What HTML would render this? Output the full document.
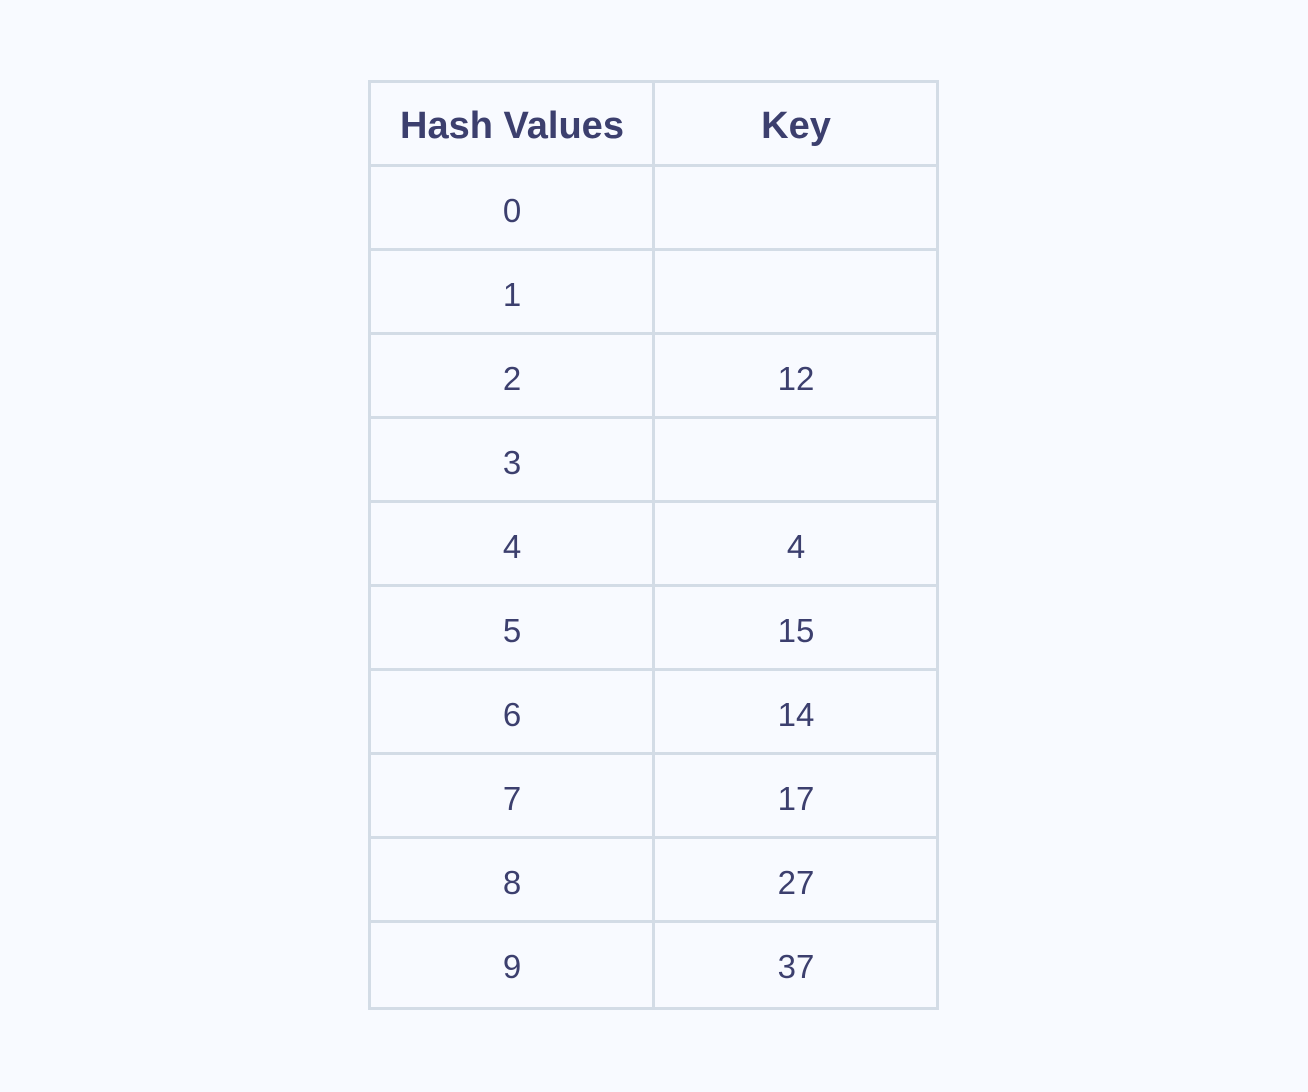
<!DOCTYPE html>
<html><head><style>
body{margin:0;width:1308px;height:1092px;background:#f8faff;position:relative;font-family:"Liberation Sans",sans-serif;color:#3c3f6e;overflow:hidden}
.h{position:absolute;left:368px;width:571px;height:3px;background:#d3dce6}
.v{position:absolute;top:80px;width:3px;height:930px;background:#d3dce6}
.t{position:absolute;width:284px;text-align:center;font-size:33px;line-height:84px}
.b{font-weight:bold;font-size:38px}
</style></head><body>
<div class="h" style="top:80px"></div>
<div class="h" style="top:164px"></div>
<div class="h" style="top:248px"></div>
<div class="h" style="top:332px"></div>
<div class="h" style="top:416px"></div>
<div class="h" style="top:500px"></div>
<div class="h" style="top:584px"></div>
<div class="h" style="top:668px"></div>
<div class="h" style="top:752px"></div>
<div class="h" style="top:836px"></div>
<div class="h" style="top:920px"></div>
<div class="h" style="top:1007px"></div>
<div class="v" style="left:368px"></div>
<div class="v" style="left:652px"></div>
<div class="v" style="left:936px"></div>

<div class="t b" style="left:370px;top:84px">Hash Values</div>
<div class="t b" style="left:654px;top:84px">Key</div>

<div class="t" style="left:370px;top:169px">0</div>
<div class="t" style="left:370px;top:253px">1</div>
<div class="t" style="left:370px;top:337px">2</div><div class="t" style="left:654px;top:337px">12</div>
<div class="t" style="left:370px;top:421px">3</div>
<div class="t" style="left:370px;top:505px">4</div><div class="t" style="left:654px;top:505px">4</div>
<div class="t" style="left:370px;top:589px">5</div><div class="t" style="left:654px;top:589px">15</div>
<div class="t" style="left:370px;top:673px">6</div><div class="t" style="left:654px;top:673px">14</div>
<div class="t" style="left:370px;top:757px">7</div><div class="t" style="left:654px;top:757px">17</div>
<div class="t" style="left:370px;top:841px">8</div><div class="t" style="left:654px;top:841px">27</div>
<div class="t" style="left:370px;top:925px">9</div><div class="t" style="left:654px;top:925px">37</div>
</body></html>
